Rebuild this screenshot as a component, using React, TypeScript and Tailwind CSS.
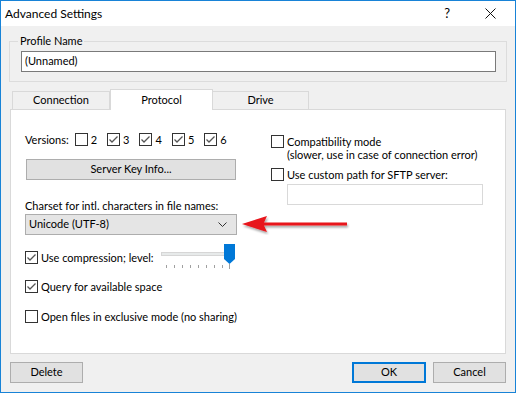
import React from "react";

const font = { fontFamily: 'Lato, "Liberation Sans", sans-serif' };

function Check({ checked }: { checked?: boolean }) {
  return (
    <span className="flex h-[13px] w-[13px] shrink-0 items-center justify-center border border-[#333] bg-white">
      {checked && (
        <svg width="11" height="11" viewBox="0 0 11 11">
          <path d="M1.5 5.5 L4 8 L9.5 2.5" fill="none" stroke="#555" strokeWidth="1.3" />
        </svg>
      )}
    </span>
  );
}

function CheckRow({ checked, label, className = "" }: { checked?: boolean; label: string; className?: string }) {
  return (
    <div className={`flex items-center gap-[3px] whitespace-nowrap ${className}`}>
      <Check checked={checked} />
      <span className="leading-[13px]">{label}</span>
    </div>
  );
}

function Button({ label, primary, className = "" }: { label: string; primary?: boolean; className?: string }) {
  return (
    <div
      className={`flex h-[21px] items-center justify-center bg-[#e1e1e1] ${
        primary ? "border-2 border-[#0078d7]" : "border border-[#adadad]"
      } ${className}`}
    >
      {label}
    </div>
  );
}

function Slider() {
  const ticks = [166, 174, 182, 190, 198, 206, 214, 222];
  return (
    <div className="relative ml-auto h-[26px] w-[76px] shrink-0">
      <div className="absolute left-0 top-[8px] h-[4px] w-[70px] border border-[#d6d6d6] bg-[#e7eaea]" />
      {ticks.map((t) => (
        <div key={t} className="absolute top-[21px] h-[3px] w-px bg-[#a0a0a0]" style={{ left: t - 161 }} />
      ))}
      <div className="absolute left-[68px] top-[20px] h-[5px] w-px bg-[#a0a0a0]" />
      <svg className="absolute left-[63px] top-0" width="11" height="20" viewBox="0 0 11 20">
        <path d="M0 0 H11 V15 L5.5 20 L0 15 Z" fill="#0078d7" />
      </svg>
    </div>
  );
}

export default function App() {
  return (
    <div
      className="relative flex h-[393px] w-[516px] flex-col border border-[#1883d7] bg-[#f0f0f0] text-[11px] text-black"
      style={font}
    >
      {/* title bar */}
      <div className="flex h-[25px] shrink-0 items-center bg-white pl-[4px]">
        <span className="text-[12px]">Advanced Settings</span>
        <span className="ml-auto mr-[35px] text-[13px]">?</span>
        <svg className="mr-[19px]" width="11" height="11" viewBox="0 0 11 11">
          <path d="M0.5 0.5 L10.5 10.5 M10.5 0.5 L0.5 10.5" stroke="#111" strokeWidth="1" />
        </svg>
      </div>

      {/* profile name group */}
      <div className="relative mx-[8px] mt-[15px] border border-[#dcdcdc] px-[11px] py-[9px]">
        <span className="absolute -top-[9px] left-[8px] bg-[#f0f0f0] px-[2px] leading-[16px]">Profile Name</span>
        <div className="flex h-[21px] w-[475px] items-center border border-[#7a7a7a] bg-white px-[3px]">(Unnamed)</div>
      </div>

      {/* tabs */}
      <div className="ml-[10px] mt-[7px] flex h-[20px] items-end pl-[1px]">
        <div className="flex h-[18px] w-[98px] items-center justify-center border border-b-0 border-[#d9d9d9] bg-[#f0f0f0]">
          Connection
        </div>
        <div className="relative z-10 -mb-px flex h-[21px] w-[103px] items-start justify-center border border-b-0 border-[#d9d9d9] bg-white pt-[2px]">
          Protocol
        </div>
        <div className="flex h-[18px] w-[96px] items-center justify-center border border-b-0 border-l-0 border-[#d9d9d9] bg-[#f0f0f0]">
          Drive
        </div>
      </div>
      <div className="relative mx-[9px] flex h-[245px] border border-[#d9d9d9] bg-white">
        {/* left column */}
        <div className="ml-[14px] flex w-[212px] shrink-0 flex-col pt-[23px]">
          <div className="flex items-center">
            <span className="mr-[6px] leading-[13px]">Versions:</span>
            <CheckRow label="2" />
            <CheckRow checked label="3" className="ml-[10px]" />
            <CheckRow checked label="4" className="ml-[10px]" />
            <CheckRow checked label="5" className="ml-[10px]" />
            <CheckRow checked label="6" className="ml-[10px]" />
          </div>
          <Button label="Server Key Info..." className="ml-[1px] mt-[13px] w-[210px]" />
          <div className="mt-[19px] whitespace-nowrap leading-[14px]">Charset for intl. characters in file names:</div>
          <div className="mt-[1px] flex h-[21px] w-[212px] items-center border border-[#adadad] bg-[#e5e5e5] pl-[3px] pr-[9px]">
            <span>Unicode (UTF-8)</span>
            <svg className="ml-auto" width="9" height="5" viewBox="0 0 9 5">
              <path d="M0.5 0.5 L4.5 4.5 L8.5 0.5" fill="none" stroke="#333" strokeWidth="1" />
            </svg>
          </div>
          <div className="mt-[9px] flex items-start">
            <CheckRow checked label="Use compression; level:" className="mt-[7px]" />
            <Slider />
          </div>
          <CheckRow checked label="Query for available space" className="mt-[10px]" />
          <CheckRow label="Open files in exclusive mode (no sharing)" className="mt-[17px]" />
        </div>

        {/* right column */}
        <div className="ml-[34px] flex flex-col pt-[25px]">
          <div className="flex items-start gap-[3px] whitespace-nowrap">
            <Check />
            <span className="leading-[13px]">
              Compatibility mode
              <br />
              (slower, use in case of connection error)
            </span>
          </div>
          <CheckRow label="Use custom path for SFTP server:" className="mt-[7px]" />
          <div className="ml-[16px] mt-[3px] h-[21px] w-[196px] border border-[#d9d9d9] bg-white" />
        </div>

        {/* annotation arrow */}
        <svg className="absolute left-[228px] top-[103px]" width="112" height="22" viewBox="0 0 112 22">
          <defs>
            <filter id="sh" x="-10%" y="-30%" width="120%" height="180%">
              <feDropShadow dx="1" dy="2" stdDeviation="1.2" floodColor="#000" floodOpacity="0.35" />
            </filter>
          </defs>
          <g filter="url(#sh)">
            <path d="M3 11 L28 3 L25 9.5 L108 9.5 L108 12.5 L25 12.5 L28 19 Z" fill="#e8141b" />
          </g>
        </svg>
      </div>

      {/* bottom buttons */}
      <div className="mx-[9px] mt-[8px] flex">
        <Button label="Delete" className="w-[73px]" />
        <Button label="OK" primary className="ml-auto w-[74px]" />
        <Button label="Cancel" className="ml-[7px] w-[73px]" />
      </div>
    </div>
  );
}
